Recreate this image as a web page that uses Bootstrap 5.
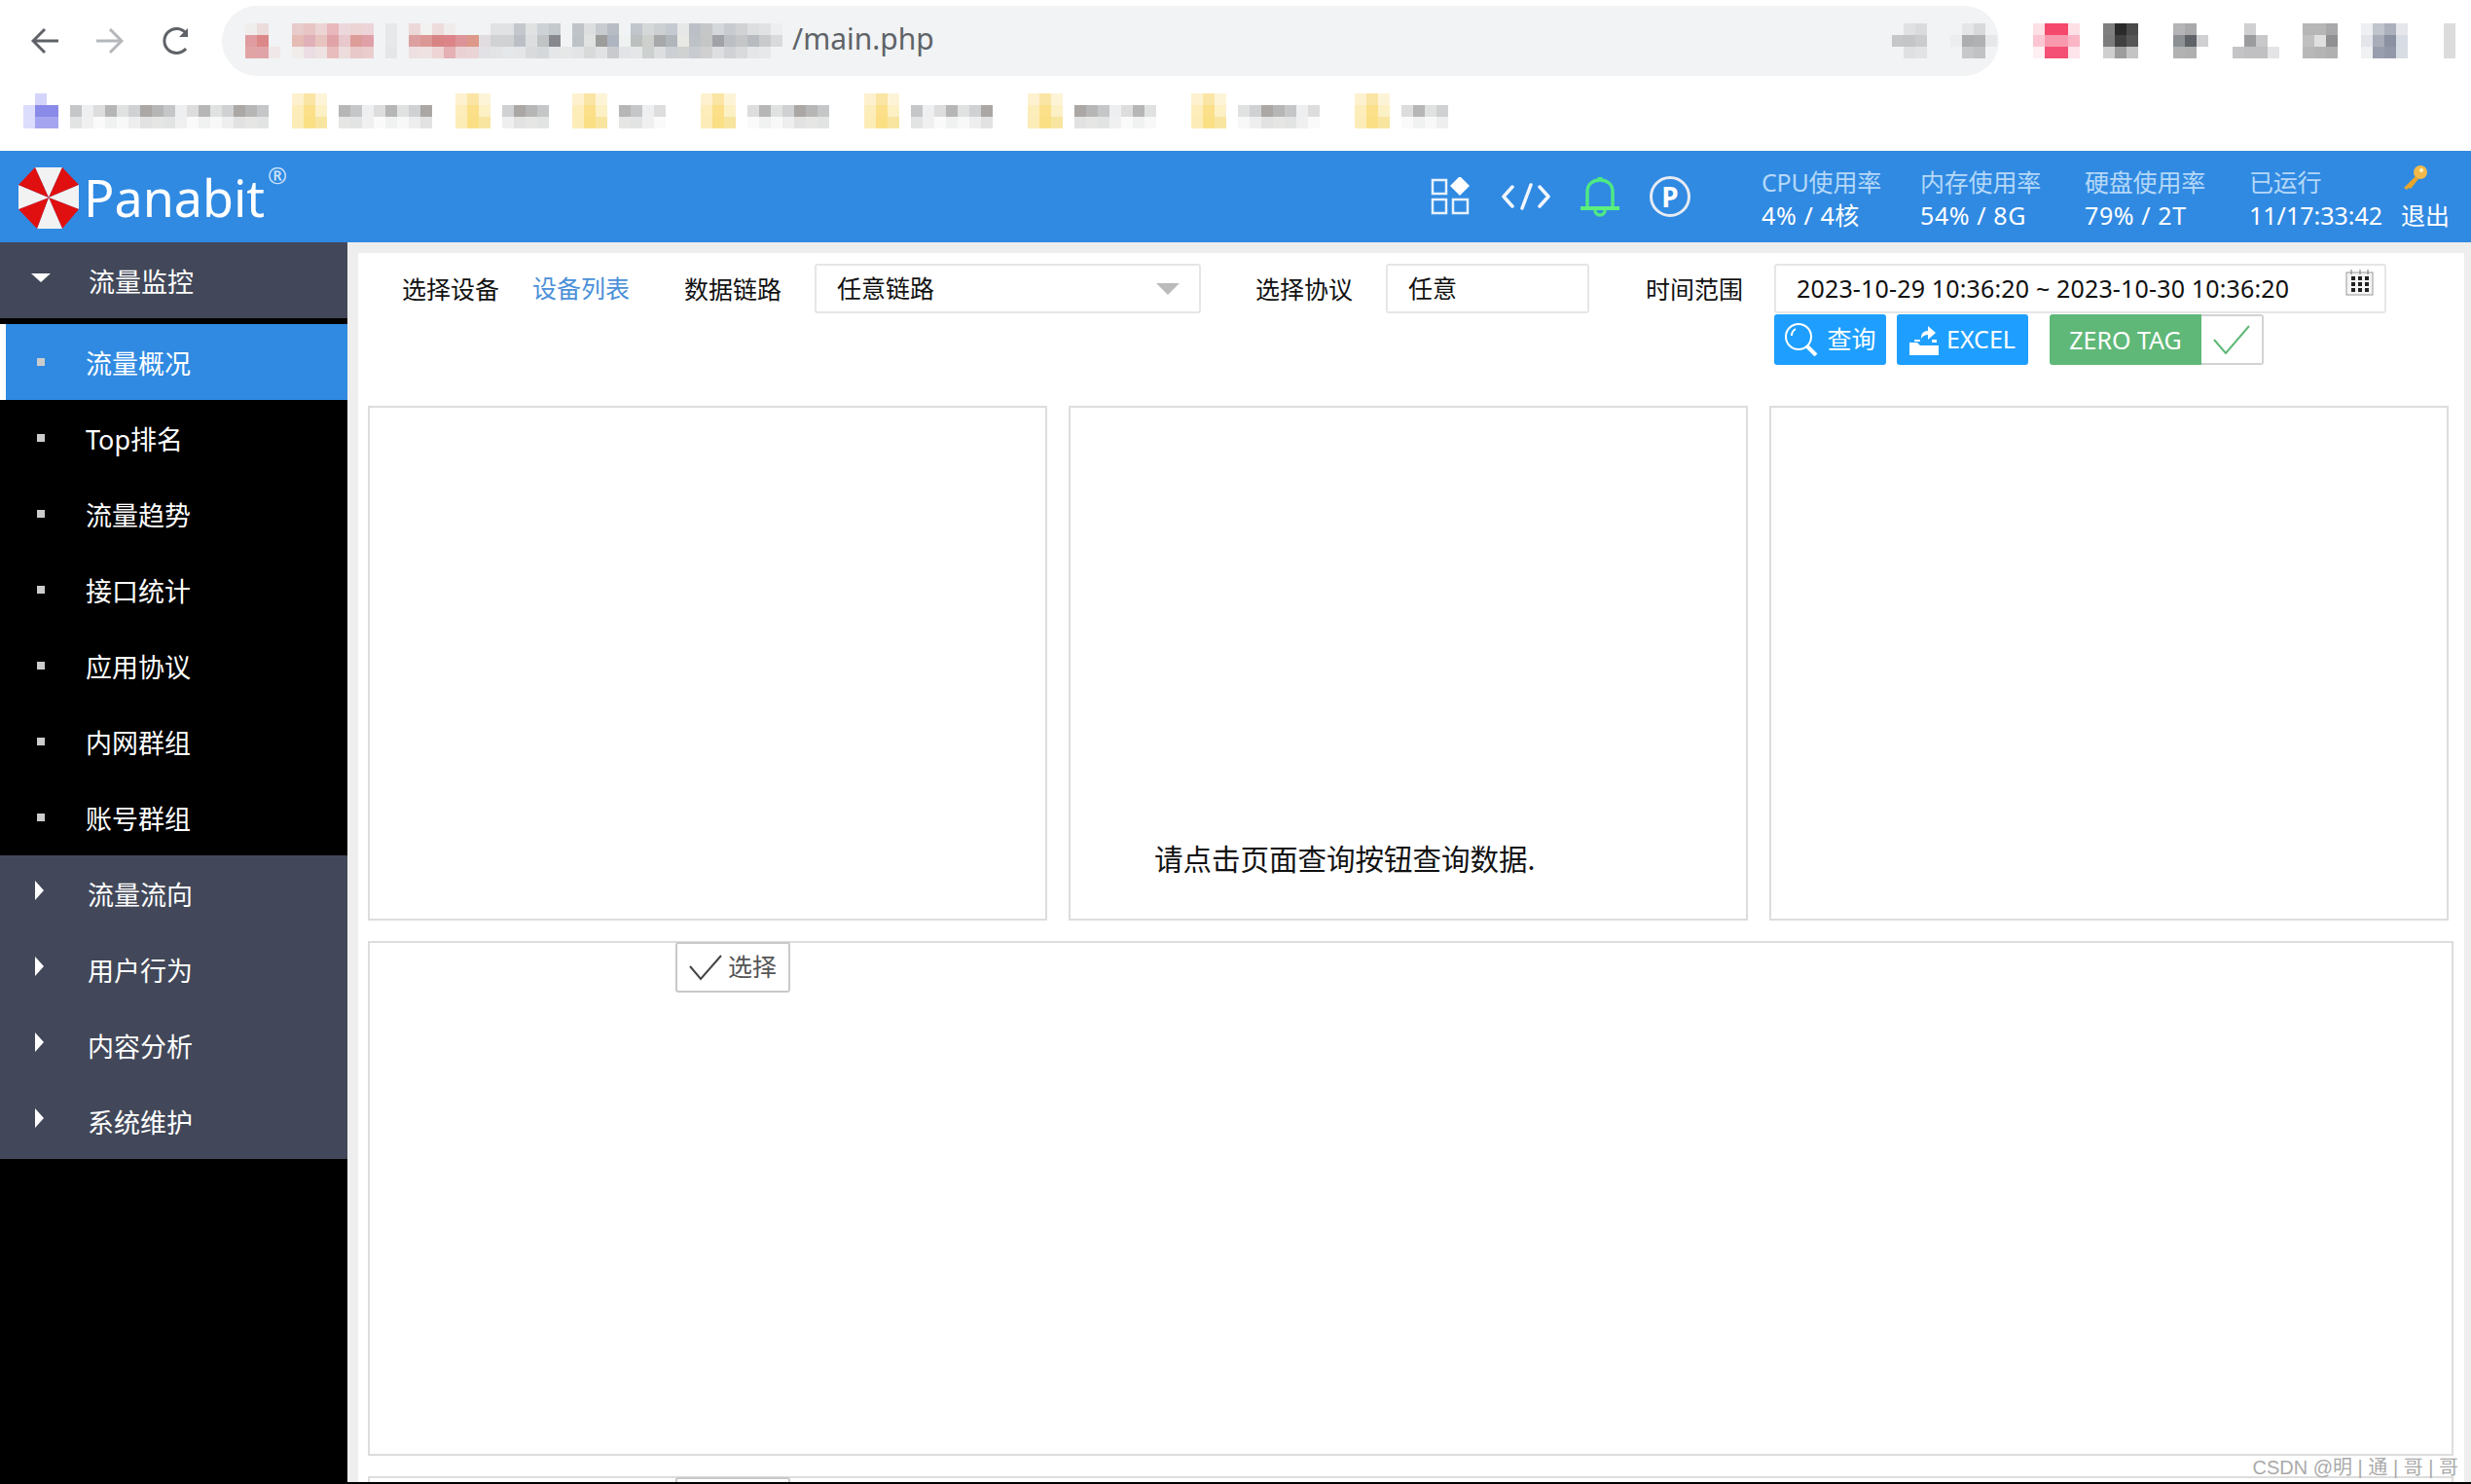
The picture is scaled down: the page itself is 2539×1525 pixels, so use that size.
<!DOCTYPE html>
<html lang="zh-CN">
<head>
    <meta charset="UTF-8">
    <title>Panabit</title>
    <link href="https://cdn.jsdelivr.net/npm/bootstrap@5.3.0/dist/css/bootstrap.min.css" rel="stylesheet">
    <style>
        html, body { height: 1525px; overflow: hidden; background: #000; }
        body { font-family: "Noto Sans", "Noto Sans CJK SC", sans-serif; font-size: 25px; color: #111; }

        /* browser chrome */
        .browser-bar { position: relative; height: 155px; background: #fff; }
        .nav-row { height: 84px; padding-top: 6px; }
        .nav-btns { width: 228px; height: 72px; padding-left: 32px; gap: 39px; }
        .url-pill { width: 1826px; height: 72px; border-radius: 36px; background: #f1f3f4; padding: 0 0 6px 586px; color: #5f6368; font-size: 30px; }
        .mosaic { position: absolute; left: 0; top: 0; width: 2539px; height: 155px; }

        /* header */
        .top-header { height: 94px; background: #308ae2; color: #fff; }
        .logo-mark { margin-left: 18px; margin-top: 2px; }
        .logo-text { margin-left: 4px; font-size: 52px; line-height: 1; margin-top: 2px; }
        .logo-reg { font-size: 24px; color: #cfe4fa; line-height: 1; margin-top: -44px; margin-left: 3px; }
        .head-icons { margin-left: auto; width: 340px; gap: 31px; }
        .p-badge { width: 42px; height: 42px; border: 3px solid #e6ebf3; border-radius: 50%; font-weight: 700; font-size: 28px; line-height: 1; }
        .stats { display: grid; grid-template-columns: 163px 169px 169px 156px 72px; line-height: 34px; font-size: 25px; white-space: nowrap; padding-top: 3px; }
        .stats .cap { color: #b4d8f8; letter-spacing: -.2px; }
        .stats .val { letter-spacing: .6px; }
        .stats .key-cell { height: 34px; }

        /* sidebar */
        .app-body { height: 1274px; }
        .side { width: 357px; background: #000; flex: none; }
        .side a { display: flex; align-items: center; height: 78px; color: #fff; text-decoration: none; font-size: 27px; padding: 4px 0 0; }
        .side .sec { background: #424859; padding-left: 36px; }
        .side .sec span { margin-left: 45px; }
        .side .sec.open { padding-left: 32px; margin-bottom: 6px; }
        .side .sec.open span { margin-left: 39px; }
        .tri-down { width: 0; height: 0; border-left: 10px solid transparent; border-right: 10px solid transparent; border-top: 9px solid #fff; margin-top: -10px; }
        .tri-right { width: 0; height: 0; border-top: 10px solid transparent; border-bottom: 10px solid transparent; border-left: 9px solid #fff; margin-top: -10px; }
        .side .item { padding-left: 38px; }
        .side .item i { width: 8px; height: 8px; background: #ccc; margin-right: 42px; margin-top: -4px; }
        .side .item.active { background: #308ae2; border-left: 6px solid #fff; padding-left: 32px; }

        /* main */
        .main-area { flex: 1; background: #eee; padding: 11px 7px 0 11px; min-width: 0; }
        .panel { background: #fff; height: 100%; padding: 0 0 0 10px; position: relative; overflow: hidden; }
        .filter { height: 157px; padding: 11px 0 0 35px; }
        .lbl { width: 101px; white-space: nowrap; margin-top: 9px; line-height: 34px; }
        .gap-a { margin-right: 33px; }
        .gap-b { margin-left: 56px; margin-right: 33px; }
        .gap-c { margin-left: 58px; margin-right: 31px; }
        .lnk { width: 100px; color: #4a90d9; text-decoration: none; line-height: 34px; margin-top: 8px; white-space: nowrap; }
        .fld { height: 51px; border: 2px solid #e6e6e6; border-radius: 3px; padding: 0 21px; line-height: 47px; color: #111; font-size: 25px; }
        .fld-sel { width: 397px; }
        .fld-sel b { width: 0; height: 0; border-left: 12px solid transparent; border-right: 12px solid transparent; border-top: 12px solid #bbb; margin-right: -1px; }
        .fld-proto { width: 209px; }
        .range-col { width: 629px; }
        .fld-time { padding-right: 10px; white-space: nowrap; letter-spacing: .16px; }
        .btn-row { margin-top: 1px; }
        .btn-q { background: #1e9fff; border: 0; border-radius: 3px; color: #fff; height: 52px; font-size: 25px; padding: 0; }
        .btn-q:hover { background: #1e9fff; color: #fff; }
        .btn-excel { width: 135px; margin-left: 11px; }
        .zero { margin-left: 22px; }
        .zero span { background: #5fb878; color: #fff; height: 52px; width: 156px; line-height: 52px; text-align: center; border-radius: 3px 0 0 3px; font-size: 25px; }
        .zero em { width: 64px; height: 52px; border: 2px solid #d2d2d2; border-left: 0; border-radius: 0 3px 3px 0; }
        .chart-row { gap: 22px; width: 2138px; }
        .chart { flex: 1; height: 529px; border: 2px solid #ddd; }
        .msg { padding: 0 0 41px 86px; font-size: 29.5px; white-space: nowrap; line-height: 40px; }
        .tbl { width: 2143px; height: 529px; border: 2px solid #ddd; margin-top: 21px; padding-left: 314px; }
        .pick { width: 118px; height: 52px; border: 2px solid #c9c9c9; border-radius: 3px; color: #555; font-size: 25px; background: #fff; margin-top: -1px; gap: 6px; }
        .watermark { position: absolute; right: 6px; bottom: 5px; font-family: "Liberation Sans", "Noto Sans CJK SC", sans-serif; color: #aaa; font-size: 20px; line-height: 20px; white-space: nowrap; }
    </style>
</head>
<body>
    <!-- blurred browser toolbar -->
    <div class="browser-bar">
        <div class="nav-row d-flex align-items-start">
            <div class="nav-btns d-flex align-items-center">
                <svg width="28" height="28" viewBox="0 0 28 28" fill="none" stroke="#5f6368" stroke-width="3"><path d="M28 14H3M14 2L2 14l12 12"/></svg>
                <svg width="28" height="28" viewBox="0 0 28 28" fill="none" stroke="#b4b7bb" stroke-width="3"><path d="M0 14h25M14 2l12 12-12 12"/></svg>
                <svg width="30" height="30" viewBox="0 0 30 30" fill="none" stroke="#5f6368" stroke-width="3"><path d="M25 23a12.500 12.500 0 1 1 0-16"/><path d="M27 2v9h-9" fill="#5f6368" stroke="none"/></svg>
            </div>
            <div class="url-pill d-flex align-items-center">/main.php</div>
        </div>
        <svg class="mosaic" id="mosaic" viewBox="0 0 2539 155"></svg>
    </div>

    <header class="top-header d-flex align-items-center">
        <svg class="logo-mark" width="64" height="65" viewBox="0 0 64 65">
            <polygon points="18,1 46,1 32,32" fill="#f2f2f2"/>
            <polygon points="46,1 63,19 32,32" fill="#e01010"/>
            <polygon points="63,19 63,44 32,32" fill="#f2f2f2"/>
            <polygon points="63,44 46,64 32,32" fill="#e01010"/>
            <polygon points="46,64 20,64 32,32" fill="#f2f2f2"/>
            <polygon points="20,64 1,44 32,32" fill="#e01010"/>
            <polygon points="1,44 1,19 32,32" fill="#f2f2f2"/>
            <polygon points="1,19 18,1 32,32" fill="#e01010"/>
        </svg>
        <div class="logo-text">Panabit</div>
        <div class="logo-reg">®</div>

        <div class="head-icons d-flex align-items-center">
            <svg width="42" height="40" viewBox="0 0 42 40" fill="none" stroke="#e8f1fb" stroke-width="2.500">
                <rect x="2" y="3" width="14" height="14"/><path d="M30 -1l10 10-10 10-10-10z" fill="#fff" stroke="none"/>
                <rect x="2" y="23" width="14" height="14"/><rect x="23" y="23" width="15" height="14"/>
            </svg>
            <svg width="50" height="28" viewBox="0 0 50 28" fill="none" stroke="#f2f7fd" stroke-width="3.500" stroke-linecap="round" stroke-linejoin="round"><path d="M11 4L2 14l9 10M30 2l-9 24M39 4l9 10-9 10"/></svg>
            <svg width="40" height="41" viewBox="0 0 40 41" fill="none" stroke="#4ee884" stroke-width="3.500"><path d="M7 31V15C7 7 13 3 20 3s13 4 13 12v16"/><path d="M0 32h40" stroke="#5cf07c" stroke-width="4"/><path d="M15 34a5 5 0 0 0 10 0"/><path d="M20 0v3" stroke-width="5"/></svg>
            <div class="p-badge d-flex align-items-center justify-content-center">P</div>
        </div>

        <div class="stats">
            <div class="cap">CPU使用率</div><div class="cap">内存使用率</div><div class="cap">硬盘使用率</div><div class="cap">已运行</div>
            <div class="key-cell"><svg width="28" height="27" viewBox="0 0 28 27" style="margin-top:-14px"><circle cx="20" cy="8" r="7" fill="#f1b94a"/><path d="M15 12L3 24l3 2 2-2 2 1 8-10z" fill="#e7a52c"/><circle cx="21" cy="6" r="2" fill="#fff3c4"/></svg></div>
            <div class="val">4% / 4核</div><div class="val">54% / 8G</div><div class="val">79% / 2T</div><div>11/17:33:42</div><div>退出</div>
        </div>
    </header>

    <div class="app-body d-flex">
        <nav class="side nav flex-column">
            <a class="sec open" href="#"><i class="tri-down"></i><span>流量监控</span></a>
            <a class="item active" href="#"><i></i>流量概况</a>
            <a class="item" href="#"><i></i>Top排名</a>
            <a class="item" href="#"><i></i>流量趋势</a>
            <a class="item" href="#"><i></i>接口统计</a>
            <a class="item" href="#"><i></i>应用协议</a>
            <a class="item" href="#"><i></i>内网群组</a>
            <a class="item" href="#"><i></i>账号群组</a>
            <a class="sec" href="#"><i class="tri-right"></i><span>流量流向</span></a>
            <a class="sec" href="#"><i class="tri-right"></i><span>用户行为</span></a>
            <a class="sec" href="#"><i class="tri-right"></i><span>内容分析</span></a>
            <a class="sec" href="#"><i class="tri-right"></i><span>系统维护</span></a>
        </nav>

        <main class="main-area">
            <div class="panel">
                <div class="filter d-flex align-items-start">
                    <div class="lbl gap-a">选择设备</div>
                    <a class="lnk" href="#">设备列表</a>
                    <div class="lbl gap-b">数据链路</div>
                    <div class="fld fld-sel d-flex align-items-center justify-content-between">任意链路<b></b></div>
                    <div class="lbl gap-b">选择协议</div>
                    <div class="fld fld-proto">任意</div>
                    <div class="lbl gap-c">时间范围</div>
                    <div class="range-col">
                        <div class="fld fld-time d-flex justify-content-between">
                            <span>2023-10-29 10:36:20 ~ 2023-10-30 10:36:20</span>
                            <svg class="mt-1" width="30" height="27" viewBox="0 0 30 27"><rect x="1" y="3" width="27" height="23" fill="#f4f4f4" stroke="#999"/><path d="M6 0v5M15 0v5M23 0v5" stroke="#777"/><g fill="#222"><rect x="6" y="7" width="4" height="4"/><rect x="13" y="7" width="4" height="4"/><rect x="20" y="7" width="4" height="4"/><rect x="6" y="13" width="4" height="4"/><rect x="13" y="13" width="4" height="4"/><rect x="20" y="13" width="4" height="4"/><rect x="6" y="19" width="4" height="4"/><rect x="13" y="19" width="4" height="4"/><rect x="20" y="19" width="4" height="4"/></g></svg>
                        </div>
                        <div class="btn-row d-flex">
                            <button class="btn btn-q d-flex align-items-center justify-content-center gap-2" style="width:115px">
                                <svg width="36" height="34" viewBox="0 0 36 34" fill="none" stroke="#fff" stroke-width="2"><circle cx="15" cy="14" r="13"/><path d="M8 13a8 8 0 0 1 4-7"/><path d="M24 24l9 9" stroke-width="4"/></svg>查询
                            </button>
                            <button class="btn btn-q btn-excel d-flex align-items-center justify-content-center gap-2">
                                <svg width="30" height="31" viewBox="0 0 30 31" fill="#fff"><path d="M0 18h8l3 3h19v10H0z"/><path d="M23 15h5v3h-5zM5 15h6v2H5zM12 14c0-6 3-8 7-8V1l8 7-8 7v-5c-3 0-5 1-7 4z"/></svg>EXCEL
                            </button>
                            <div class="zero d-flex">
                                <span>ZERO TAG</span>
                                <em class="d-flex align-items-center justify-content-center"><svg width="38" height="30" viewBox="0 0 38 30" fill="none" stroke="#5fb878" stroke-width="2"><path d="M1 15l12 14L37 1"/></svg></em>
                            </div>
                        </div>
                    </div>
                </div>

                <div class="chart-row d-flex">
                    <div class="chart"></div>
                    <div class="chart d-flex align-items-end"><div class="msg">请点击页面查询按钮查询数据.</div></div>
                    <div class="chart"></div>
                </div>
                <div class="tbl">
                    <button class="btn pick d-flex align-items-center justify-content-center p-0"><svg width="34" height="28" viewBox="0 0 34 28" fill="none" stroke="#444" stroke-width="2"><path d="M1 13l11 13L33 2"/></svg>选择</button>
                </div>
                <div class="tbl">
                    <button class="btn pick p-0"></button>
                </div>
                <div class="watermark">CSDN @明 | 通 | 哥 | 哥</div>
            </div>
        </main>
    </div>

    <script>
        // the pixelated parts of the reference: each row is a list of cell colours, '.' is empty
        const svg = document.getElementById('mosaic');
        const NS = 'http://www.w3.org/2000/svg';

        const cells = (x, y, row, w = 12, h = 12) => {
            row.split(' ').forEach((c, i) => {
                if (c === '.') return;
                const r = document.createElementNS(NS, 'rect');
                r.setAttribute('x', x + i * w);
                r.setAttribute('y', y);
                r.setAttribute('width', w);
                r.setAttribute('height', h);
                r.setAttribute('fill', '#' + c);
                svg.appendChild(r);
            });
        };
        const block = (x, y, rows) => rows.forEach((row, i) => cells(x, y + i * 12, row));

        // address bar text
        block(252, 24, [
            'f0eded ecdcdc . . e8cccc e8c4c4 ecd4d4 e8b8bc ecd8dc ecd4d4 ecd4d8 . e6e8ea . ecd8d8 f2f2f0 eedcdc f0ecec . . . e0e2e4 e0e2e4 c4c8cc e0e2e2 ccd2d6 c4cacc . c0c4c8 dcdee0 c8ccd0 b8bcc4 . c0c6cc d4d8d8 ccd0d2 c4cad0 e6e8e8 bcc0c6 c4c6c8 d4d8da c8ccd0 d0d2d4 dcdee0 e0e2e4 eceef0',
            'e09ca0 dc8888 . . e4bcb4 e0b0b8 e8c4c0 e0a4a8 e8c8cc dc9c98 e0a0a8 . e6e8ea . dca0a0 dc9894 d88484 dc8488 dc9498 dc9888 e0dce0 d0d2d4 d0d2d4 bcc0c6 dcdee0 c0c4c4 88898e . bcc2c6 e0e2e2 9c9c9a aeb4c0 eef2f0 bcc0be ced0ce a6a8aa b0b6ba e8e8e4 bcc2c6 c4c6c6 a0a2a8 bcc0c4 c4c6c8 b8bcc0 c8cacc d8dadc',
            'e0a4a4 e0a4a8 f0e8e8 . f0ecea ecdce4 eee2e2 e8bcbc ecdcdc e8c8c8 eacccc . e4e6e8 . eee0e2 eee2e2 eed4d4 e4b0b4 ead2d4 ead4d6 e2e2e6 e2e4e6 e4e8ea e4e6e8 d8dadc d4d8da e4e6e8 e6e8e8 e2e4e6 d8dada e0e2e4 c8cace e2e4e8 e4e6e8 ccd0ce dcdee0 ccd0d4 d0d2d2 c8ccd0 d0d0d0 dcdee0 d0d2d6 d8dadc e4e6e8 e6e8ea .'
        ]);

        // bookmark bar: folder icons and blurred titles
        block(24, 96, ['. d4d4fa .', 'dcdcfc 8a8ae8 8a8ae8', 'dcdcfc a4a4f0 a4a4f0']);
        const folders = [300, 468, 588, 720, 888, 1056, 1224, 1392];
        folders.forEach((x) => block(x, 96, ['fdf1cf fbe5a5 fdf4d8', 'fcedba fbe089 fcf0c5', 'fcedb8 fbdf85 f8e5a0']));
        const darks = ['dddddd', 'b6b6b6', 'e0e2e2', 'cfd1d3', 'aaa7a4', 'b6b6b6', 'c4c6c8', 'eeeff0'];
        const lights = ['fafafa', 'f0f2f2', 'f8f8f8', 'eeeeee', 'e2e2e2', 'e6e6e4', 'e2e4e4', 'f0f0f0'];
        [[72, 17], [348, 8], [516, 4], [636, 4], [768, 7], [936, 7], [1104, 7], [1272, 7], [1440, 4]].forEach(([x, n]) => {
            for (let i = 0; i < n; i++) {
                cells(x + i * 12, 108, darks[(i + x / 12) % 8]);
                cells(x + i * 12, 120, lights[(i + x / 12) % 8]);
            }
        });

        // extension icons
        block(1944, 24, ['. e0e1e3 dadbdd', 'c6c7c9 c4c5c7 cbcccd', '. dfe0e2 e2e3e5']);
        block(2004, 24, ['. e5e6e8 d8d9db .', 'ecedef adaeb0 b0b1b3 e6e7e9', '. c7c8ca c1c2c4 .']);
        block(2089, 24, ['fde0e6 f4486c f4486c fde0e6', 'fbc6d2 f89aae f89aae fbb6c6', 'fef0f2 f44f74 f44f74 fde4ea']);
        block(2161, 24, ['7f7f7f 2a2a2a 4a4a4a', '7c7c7c 404040 565656', 'cfcfcf 9c9c9c c4c4c4']);
        block(2233, 24, ['b4b4b6 a9a9ab .', '8d9092 5f6266 d0d0d2', 'b2b2b2 b0b0b0 .']);
        block(2294, 24, ['. d0d0d2 . .', '. 9a9c9e c8c8ca .', 'c4c4c6 c0c0c2 c0c0c2 e4e4e6']);
        block(2366, 24, ['b6b6b6 b6b6b6 a8a8aa', 'c0c0c0 e0e0e0 909092', 'b8b8b8 b4b4b4 b0b0b0']);
        block(2426, 24, ['eeeff3 c0c4cc acb0bc e6e7ec', 'e4e5ea a9adba 8b91a0 d8dce4', 'f0f1f3 989eae 9298a8 d8dde4']);
        block(2511, 24, ['dcdcdc', 'dcdcdc', 'dcdcdc']);
    </script>
    <script src="https://cdn.jsdelivr.net/npm/bootstrap@5.3.0/dist/js/bootstrap.bundle.min.js"></script>
</body>
</html>
